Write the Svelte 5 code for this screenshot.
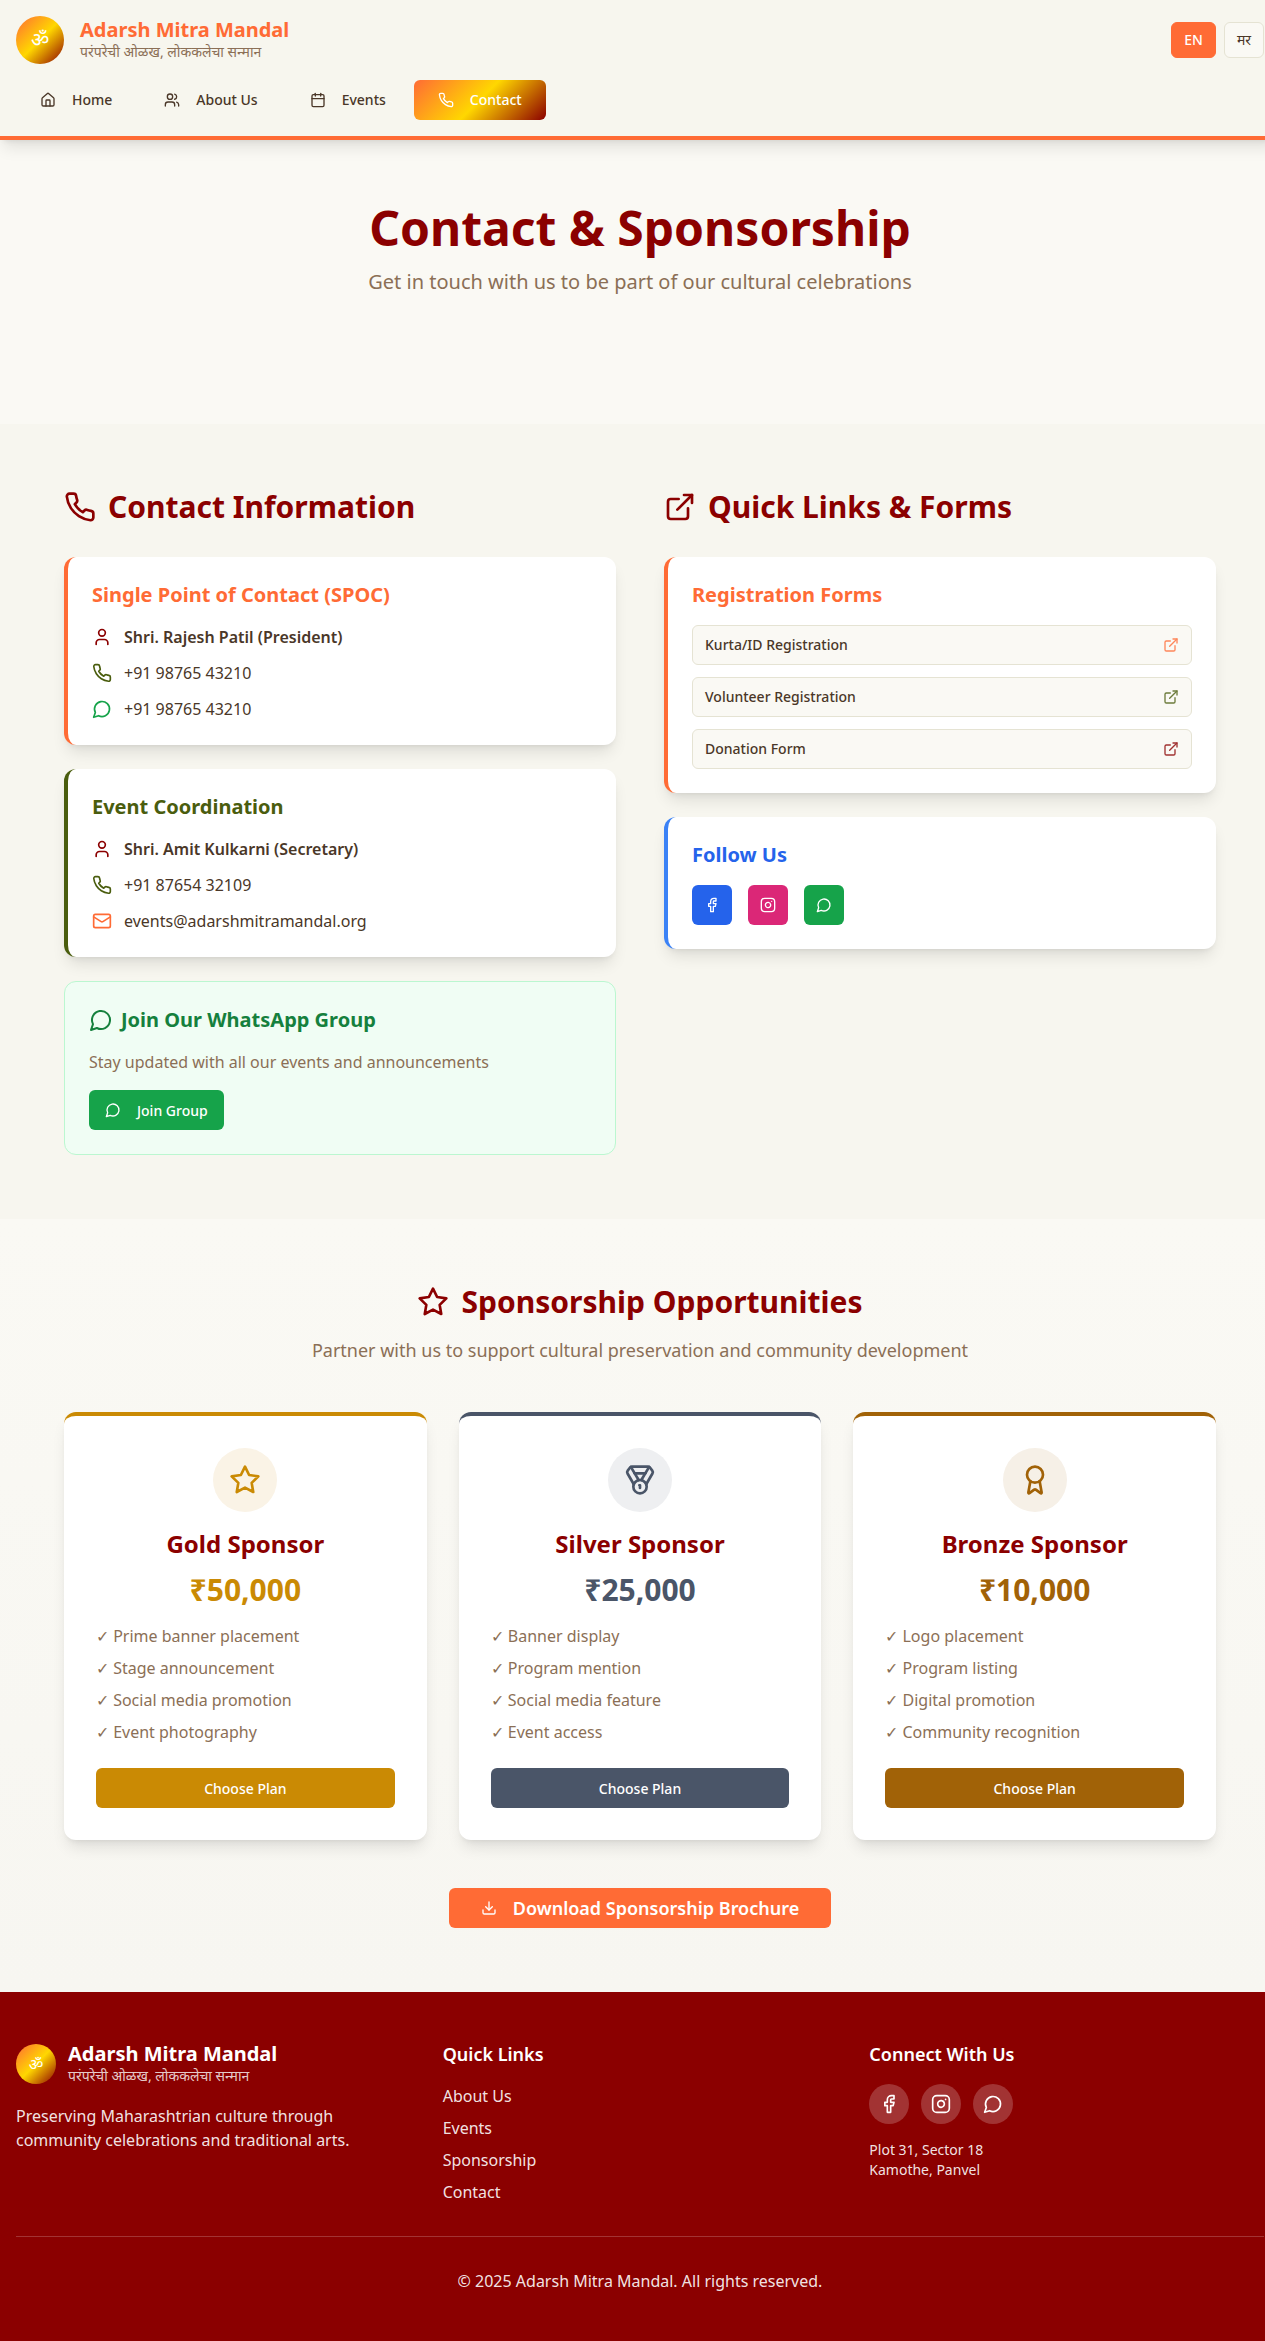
<script>
  const icons = {
    home: '<path d="M15 21v-8a1 1 0 0 0-1-1h-4a1 1 0 0 0-1 1v8"/><path d="M3 10a2 2 0 0 1 .709-1.528l7-5.999a2 2 0 0 1 2.582 0l7 5.999A2 2 0 0 1 21 10v9a2 2 0 0 1-2 2H5a2 2 0 0 1-2-2z"/>',
    users: '<path d="M16 21v-2a4 4 0 0 0-4-4H6a4 4 0 0 0-4 4v2"/><circle cx="9" cy="7" r="4"/><path d="M22 21v-2a4 4 0 0 0-3-3.87"/><path d="M16 3.13a4 4 0 0 1 0 7.75"/>',
    calendar: '<path d="M8 2v4"/><path d="M16 2v4"/><rect width="18" height="18" x="3" y="4" rx="2"/><path d="M3 10h18"/>',
    phone: '<path d="M22 16.92v3a2 2 0 0 1-2.18 2 19.79 19.79 0 0 1-8.63-3.07 19.5 19.5 0 0 1-6-6 19.79 19.79 0 0 1-3.07-8.67A2 2 0 0 1 4.11 2h3a2 2 0 0 1 2 1.72 12.84 12.84 0 0 0 .7 2.81 2 2 0 0 1-.45 2.11L8.09 9.91a16 16 0 0 0 6 6l1.27-1.27a2 2 0 0 1 2.11-.45 12.84 12.84 0 0 0 2.81.7A2 2 0 0 1 22 16.92z"/>',
    user: '<path d="M19 21v-2a4 4 0 0 0-4-4H9a4 4 0 0 0-4 4v2"/><circle cx="12" cy="7" r="4"/>',
    chat: '<path d="M7.9 20A9 9 0 1 0 4 16.1L2 22Z"/>',
    mail: '<rect width="20" height="16" x="2" y="4" rx="2"/><path d="m22 7-8.97 5.7a1.94 1.94 0 0 1-2.06 0L2 7"/>',
    external: '<path d="M15 3h6v6"/><path d="M10 14 21 3"/><path d="M18 13v6a2 2 0 0 1-2 2H5a2 2 0 0 1-2-2V8a2 2 0 0 1 2-2h6"/>',
    facebook: '<path d="M18 2h-3a5 5 0 0 0-5 5v3H7v4h3v8h4v-8h3l1-4h-4V7a1 1 0 0 1 1-1h3z"/>',
    instagram: '<rect width="20" height="20" x="2" y="2" rx="5" ry="5"/><path d="M16 11.37A4 4 0 1 1 12.63 8 4 4 0 0 1 16 11.37z"/><line x1="17.5" x2="17.51" y1="6.5" y2="6.5"/>',
    star: '<polygon points="12 2 15.09 8.26 22 9.27 17 14.14 18.18 21.02 12 17.77 5.82 21.02 7 14.14 2 9.27 8.91 8.26 12 2"/>',
    medal: '<path d="M7.21 15 2.66 7.14a2 2 0 0 1 .13-2.2L4.4 2.8A2 2 0 0 1 6 2h12a2 2 0 0 1 1.6.8l1.6 2.14a2 2 0 0 1 .14 2.2L16.79 15"/><path d="M11 12 5.12 2.2"/><path d="m13 12 5.88-9.8"/><path d="M8 7h8"/><circle cx="12" cy="17" r="5"/><path d="M12 18v-2h-.5"/>',
    award: '<path d="m15.477 12.89 1.515 8.526a.5.5 0 0 1-.81.47l-3.58-2.687a1 1 0 0 0-1.197 0l-3.586 2.686a.5.5 0 0 1-.81-.469l1.514-8.526"/><circle cx="12" cy="8" r="6"/>',
    download: '<path d="M21 15v4a2 2 0 0 1-2 2H5a2 2 0 0 1-2-2v-4"/><polyline points="7 10 12 15 17 10"/><line x1="12" x2="12" y1="15" y2="3"/>'
  }

  const nav = [
    { label: 'Home', icon: 'home' },
    { label: 'About Us', icon: 'users' },
    { label: 'Events', icon: 'calendar' },
    { label: 'Contact', icon: 'phone', active: true }
  ]

  const forms = [
    { label: 'Kurta/ID Registration', cls: 'orange' },
    { label: 'Volunteer Registration', cls: 'green' },
    { label: 'Donation Form', cls: 'maroon' }
  ]

  const plans = [
    {
      cls: 'gold',
      icon: 'star',
      name: 'Gold Sponsor',
      price: '₹50,000',
      perks: ['Prime banner placement', 'Stage announcement', 'Social media promotion', 'Event photography']
    },
    {
      cls: 'silver',
      icon: 'medal',
      name: 'Silver Sponsor',
      price: '₹25,000',
      perks: ['Banner display', 'Program mention', 'Social media feature', 'Event access']
    },
    {
      cls: 'bronze',
      icon: 'award',
      name: 'Bronze Sponsor',
      price: '₹10,000',
      perks: ['Logo placement', 'Program listing', 'Digital promotion', 'Community recognition']
    }
  ]

  const footerLinks = ['About Us', 'Events', 'Sponsorship', 'Contact']
  const socials = ['facebook', 'instagram', 'chat']
</script>

{#snippet icon(name, size)}
  <svg
    class="icon"
    width={size}
    height={size}
    viewBox="0 0 24 24"
    fill="none"
    stroke="currentColor"
    stroke-width="2"
    stroke-linecap="round"
    stroke-linejoin="round"
    aria-hidden="true">{@html icons[name]}</svg>
{/snippet}

<div class="page">
  <header class="header">
    <div class="top-row">
      <div class="brand">
        <div class="logo">ॐ</div>
        <div>
          <div class="brand-name">Adarsh Mitra Mandal</div>
          <div class="brand-tag">परंपरेची ओळख, लोककलेचा सन्मान</div>
        </div>
      </div>
      <div class="lang">
        <button class="lang-btn on">EN</button>
        <button class="lang-btn">मर</button>
      </div>
    </div>
    <nav class="nav">
      {#each nav as item}
        <a class="nav-item" class:active={item.active} href="#top">
          {@render icon(item.icon, 16)}
          <span>{item.label}</span>
        </a>
      {/each}
    </nav>
  </header>

  <section class="hero">
    <h1>Contact &amp; Sponsorship</h1>
    <p>Get in touch with us to be part of our cultural celebrations</p>
  </section>

  <section class="contact">
    <div class="columns">
      <div class="column">
        <h2 class="heading">{@render icon('phone', 32)}Contact Information</h2>

        <div class="card border-orange">
          <h3 class="orange">Single Point of Contact (SPOC)</h3>
          <div class="rows">
            <div class="row strong"><span class="maroon">{@render icon('user', 20)}</span>Shri. Rajesh Patil (President)</div>
            <div class="row"><span class="green">{@render icon('phone', 20)}</span>+91 98765 43210</div>
            <div class="row"><span class="wa">{@render icon('chat', 20)}</span>+91 98765 43210</div>
          </div>
        </div>

        <div class="card border-green">
          <h3 class="green">Event Coordination</h3>
          <div class="rows">
            <div class="row strong"><span class="maroon">{@render icon('user', 20)}</span>Shri. Amit Kulkarni (Secretary)</div>
            <div class="row"><span class="green">{@render icon('phone', 20)}</span>+91 87654 32109</div>
            <div class="row"><span class="orange">{@render icon('mail', 20)}</span>events@adarshmitramandal.org</div>
          </div>
        </div>

        <div class="whatsapp">
          <h3>{@render icon('chat', 24)}Join Our WhatsApp Group</h3>
          <p>Stay updated with all our events and announcements</p>
          <button class="join">{@render icon('chat', 16)}Join Group</button>
        </div>
      </div>

      <div class="column">
        <h2 class="heading">{@render icon('external', 32)}Quick Links &amp; Forms</h2>

        <div class="card border-orange">
          <h3 class="orange">Registration Forms</h3>
          <div class="forms">
            {#each forms as form}
              <a class="form-link" href="#top">
                <span>{form.label}</span>
                <span class="form-icon {form.cls}">{@render icon('external', 16)}</span>
              </a>
            {/each}
          </div>
        </div>

        <div class="card border-blue">
          <h3 class="blue">Follow Us</h3>
          <div class="follow">
            <a class="square fb" href="#top">{@render icon('facebook', 16)}</a>
            <a class="square ig" href="#top">{@render icon('instagram', 16)}</a>
            <a class="square wa-bg" href="#top">{@render icon('chat', 16)}</a>
          </div>
        </div>
      </div>
    </div>
  </section>

  <section class="sponsors">
    <h2 class="heading center">{@render icon('star', 32)}Sponsorship Opportunities</h2>
    <p class="sponsors-sub">Partner with us to support cultural preservation and community development</p>

    <div class="plans">
      {#each plans as plan}
        <div class="plan {plan.cls}">
          <div class="plan-icon">{@render icon(plan.icon, 32)}</div>
          <h3>{plan.name}</h3>
          <div class="price">{plan.price}</div>
          <ul>
            {#each plan.perks as perk}
              <li>✓ {perk}</li>
            {/each}
          </ul>
          <button class="choose">Choose Plan</button>
        </div>
      {/each}
    </div>

    <div class="download-wrap">
      <button class="download">{@render icon('download', 16)}Download Sponsorship Brochure</button>
    </div>
  </section>

  <footer class="footer">
    <div class="footer-grid">
      <div>
        <div class="footer-brand">
          <div class="logo small">ॐ</div>
          <div>
            <div class="footer-name">Adarsh Mitra Mandal</div>
            <div class="footer-tag">परंपरेची ओळख, लोककलेचा सन्मान</div>
          </div>
        </div>
        <p class="footer-desc">Preserving Maharashtrian culture through community celebrations and traditional arts.</p>
      </div>
      <div>
        <h4>Quick Links</h4>
        <div class="footer-links">
          {#each footerLinks as link}
            <a href="#top">{link}</a>
          {/each}
        </div>
      </div>
      <div>
        <h4>Connect With Us</h4>
        <div class="footer-social">
          {#each socials as s}
            <a class="circle" href="#top">{@render icon(s, 20)}</a>
          {/each}
        </div>
        <p class="address">Plot 31, Sector 18<br />Kamothe, Panvel</p>
      </div>
    </div>
    <div class="copyright">© 2025 Adarsh Mitra Mandal. All rights reserved.</div>
  </footer>
</div>

<style>
  :global(body) {
    margin: 0;
    overflow-x: hidden;
    background: #faf9f4;
  }

  .page {
    width: 1280px;
    font-family: 'Noto Sans', sans-serif;
    font-size: 16px;
    line-height: 24px;
    color: #4a3728;
  }

  .icon {
    display: block;
    flex-shrink: 0;
  }

  a {
    color: inherit;
    text-decoration: none;
  }

  button {
    font-family: inherit;
    border: none;
    cursor: pointer;
  }

  h1, h2, h3, h4, p, ul {
    margin: 0;
    padding: 0;
  }

  .orange { color: #ff6b35; }
  .green { color: #4a5d0e; }
  .maroon { color: #8b0000; }
  .blue { color: #2563eb; }
  .wa { color: #16a34a; }

  .header {
    position: relative;
    z-index: 2;
    background: #f7f6ee;
    border-bottom: 4px solid #ff6b35;
    padding: 16px;
    box-shadow: 0 10px 15px -3px rgba(0, 0, 0, 0.1), 0 4px 6px -4px rgba(0, 0, 0, 0.1);
  }

  .top-row {
    display: flex;
    justify-content: space-between;
    align-items: center;
    height: 48px;
  }

  .brand {
    display: flex;
    align-items: flex-start;
    gap: 16px;
  }

  .logo {
    width: 48px;
    height: 48px;
    border-radius: 50%;
    background: linear-gradient(135deg, #ff6b35, #ffd700, #8b0000);
    color: #fff;
    font-size: 20px;
    display: flex;
    align-items: center;
    justify-content: center;
  }

  .logo.small {
    width: 40px;
    height: 40px;
    font-size: 16px;
    margin-top: 4px;
  }

  .brand-name {
    font-size: 20px;
    line-height: 28px;
    font-weight: 700;
    color: #ff6b35;
  }

  .brand-tag {
    font-size: 14px;
    line-height: 16px;
    color: #8b6f56;
  }

  .lang {
    display: flex;
    gap: 8px;
  }

  .lang-btn {
    height: 36px;
    padding: 0 12px;
    border-radius: 6px;
    font-size: 14px;
    line-height: 20px;
    font-weight: 400;
    background: #faf9f4;
    color: #4a3728;
    border: 1px solid #e5e3d3;
  }

  .lang-btn.on {
    background: #ff6b35;
    color: #fff;
    border-color: #ff6b35;
    font-weight: 500;
  }

  .nav {
    display: flex;
    gap: 4px;
    margin-top: 16px;
  }

  .nav-item {
    display: flex;
    align-items: center;
    gap: 16px;
    height: 40px;
    padding: 0 24px;
    border-radius: 6px;
    font-size: 14px;
    font-weight: 500;
  }

  .nav-item.active {
    background: linear-gradient(135deg, #ff6b35, #ffd700, #8b0000);
    color: #fff;
  }

  .hero {
    padding: 64px 0 128px;
    text-align: center;
  }

  .hero h1 {
    font-size: 48px;
    line-height: 48px;
    font-weight: 700;
    color: #8b0000;
    margin-bottom: 16px;
  }

  .hero p {
    font-size: 20px;
    line-height: 28px;
    color: #8b6f56;
  }

  .contact {
    background: #f7f6ef;
    padding: 64px;
  }

  .columns {
    display: grid;
    grid-template-columns: 1fr 1fr;
    gap: 48px;
  }

  .column {
    display: flex;
    flex-direction: column;
    gap: 24px;
  }

  .heading {
    display: flex;
    align-items: center;
    gap: 12px;
    font-size: 30px;
    line-height: 37px;
    font-weight: 700;
    color: #8b0000;
    margin-bottom: 8px;
  }

  .heading.center {
    justify-content: center;
    margin-bottom: 16px;
  }

  .card {
    background: #fff;
    border-radius: 12px;
    padding: 24px;
    box-shadow: 0 10px 15px -3px rgba(0, 0, 0, 0.1), 0 4px 6px -4px rgba(0, 0, 0, 0.1);
  }

  .border-orange { border-left: 4px solid #ff6b35; }
  .border-green { border-left: 4px solid #4a5d0e; }
  .border-blue { border-left: 4px solid #3b82f6; }

  .card h3 {
    font-size: 20px;
    line-height: 28px;
    font-weight: 700;
    margin-bottom: 16px;
  }

  .rows {
    display: flex;
    flex-direction: column;
    gap: 12px;
  }

  .row {
    display: flex;
    align-items: center;
    gap: 12px;
  }

  .row.strong {
    font-weight: 600;
  }

  .forms {
    display: flex;
    flex-direction: column;
    gap: 12px;
  }

  .form-link {
    display: flex;
    justify-content: space-between;
    align-items: center;
    height: 40px;
    box-sizing: border-box;
    padding: 0 12px;
    background: #faf9f4;
    border: 1px solid #e5e3d3;
    border-radius: 6px;
    font-size: 14px;
    font-weight: 500;
  }

  .form-icon {
    opacity: 0.8;
  }

  .follow {
    display: flex;
    gap: 16px;
  }

  .square {
    width: 40px;
    height: 40px;
    border-radius: 6px;
    color: #fff;
    display: flex;
    align-items: center;
    justify-content: center;
  }

  .fb { background: #2563eb; }
  .ig { background: #db2777; }
  .wa-bg { background: #16a34a; }

  .whatsapp {
    background: #f0fdf4;
    border: 1px solid #bbf7d0;
    border-radius: 12px;
    padding: 24px;
  }

  .whatsapp h3 {
    display: flex;
    align-items: center;
    gap: 8px;
    font-size: 20px;
    line-height: 28px;
    font-weight: 700;
    color: #15803d;
    margin-bottom: 16px;
  }

  .whatsapp p {
    font-size: 16px;
    line-height: 24px;
    color: #8b6f56;
    margin-bottom: 16px;
  }

  .join {
    display: flex;
    align-items: center;
    gap: 16px;
    height: 40px;
    padding: 0 16px;
    border-radius: 6px;
    background: #16a34a;
    color: #fff;
    font-size: 14px;
    font-weight: 500;
  }

  .sponsors {
    padding: 64px;
    background: linear-gradient(180deg, #faf9f4, #f7f6f1);
  }

  .sponsors-sub {
    text-align: center;
    font-size: 18px;
    line-height: 28px;
    color: #8b6f56;
    margin-bottom: 48px;
  }

  .plans {
    display: grid;
    grid-template-columns: repeat(3, 1fr);
    gap: 32px;
  }

  .plan {
    background: #fff;
    border-radius: 12px;
    border-top: 4px solid var(--tone);
    padding: 32px;
    text-align: center;
    box-shadow: 0 10px 15px -3px rgba(0, 0, 0, 0.1), 0 4px 6px -4px rgba(0, 0, 0, 0.1);
  }

  .gold { --tone: #ca8a04; --tint: #faf3e6; }
  .silver { --tone: #4a5568; --tint: #eeeff1; }
  .bronze { --tone: #a16207; --tint: #f6f0e7; }

  .plan-icon {
    width: 64px;
    height: 64px;
    margin: 0 auto 16px;
    border-radius: 50%;
    background: var(--tint);
    color: var(--tone);
    display: flex;
    align-items: center;
    justify-content: center;
  }

  .plan h3 {
    font-size: 24px;
    line-height: 32px;
    font-weight: 700;
    color: #8b0000;
    margin-bottom: 12px;
  }

  .price {
    font-size: 30px;
    line-height: 36px;
    font-weight: 700;
    color: var(--tone);
    margin-bottom: 16px;
  }

  .plan ul {
    list-style: none;
    display: flex;
    flex-direction: column;
    gap: 8px;
    text-align: left;
    color: #8b6f56;
    margin-bottom: 24px;
  }

  .choose {
    width: 100%;
    height: 40px;
    border-radius: 6px;
    background: var(--tone);
    color: #fff;
    font-size: 14px;
    font-weight: 500;
  }

  .download-wrap {
    display: flex;
    justify-content: center;
    margin-top: 48px;
  }

  .download {
    display: flex;
    align-items: center;
    gap: 16px;
    height: 40px;
    padding: 0 32px;
    border-radius: 6px;
    background: #ff6b35;
    color: #fff;
    font-size: 18px;
    font-weight: 600;
  }

  .footer {
    background: #8b0000;
    color: #fff;
    padding: 48px 16px;
  }

  .footer-grid {
    display: grid;
    grid-template-columns: repeat(3, 1fr);
    gap: 32px;
    padding-bottom: 32px;
    border-bottom: 1px solid rgba(255, 255, 255, 0.2);
  }

  .footer-brand {
    display: flex;
    gap: 12px;
    margin-bottom: 20px;
  }

  .footer-name {
    font-size: 20px;
    line-height: 28px;
    font-weight: 700;
  }

  .footer-tag {
    font-size: 14px;
    line-height: 16px;
    color: rgba(255, 255, 255, 0.8);
  }

  .footer-desc {
    color: rgba(255, 255, 255, 0.9);
  }

  .footer h4 {
    font-size: 18px;
    line-height: 28px;
    font-weight: 600;
    margin-bottom: 16px;
  }

  .footer-links {
    display: flex;
    flex-direction: column;
    gap: 8px;
    color: rgba(255, 255, 255, 0.9);
  }

  .footer-social {
    display: flex;
    gap: 12px;
  }

  .circle {
    width: 40px;
    height: 40px;
    border-radius: 50%;
    background: rgba(255, 255, 255, 0.2);
    display: flex;
    align-items: center;
    justify-content: center;
  }

  .address {
    margin-top: 16px;
    font-size: 14px;
    line-height: 20px;
    color: rgba(255, 255, 255, 0.9);
  }

  .copyright {
    margin-top: 32px;
    text-align: center;
    color: rgba(255, 255, 255, 0.9);
  }
</style>
